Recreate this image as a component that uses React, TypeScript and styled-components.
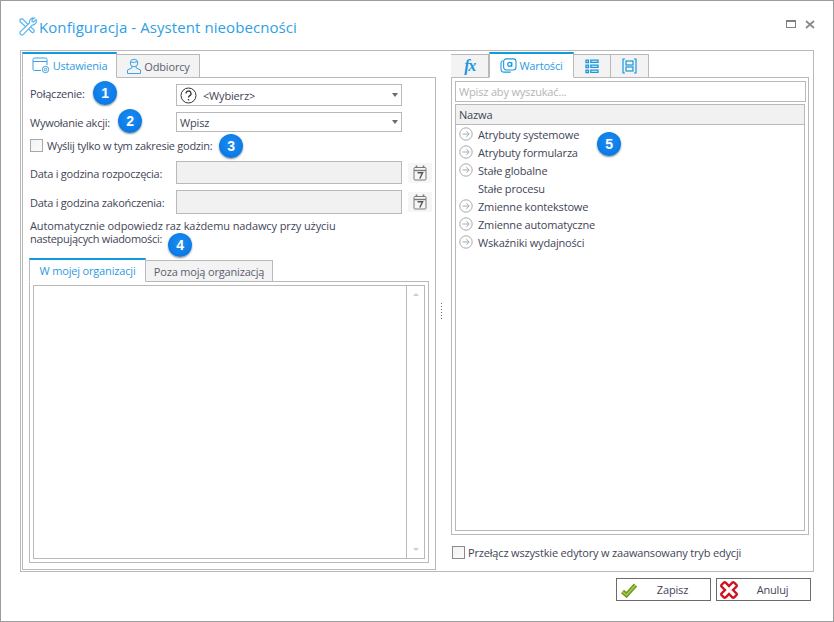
import styled, { createGlobalStyle } from "styled-components";

const Global = createGlobalStyle`
  html, body { margin: 0; padding: 0; background: #fff; }
  * { box-sizing: border-box; }
`;

const LINE = "#b9b9b9";
const BLUE = "#0f9be0";

const Dialog = styled.div`
  background: #fff;
  border: 1px solid #9c9c9c;
  color: #3f4656;
  display: flex;
  flex-direction: column;
  font-family: "Open Sans", sans-serif;
  font-size: 11px;
  height: 622px;
  letter-spacing: -0.17px;
  position: relative;
  width: 834px;
`;

const TitleBar = styled.div`
  align-items: center;
  display: flex;
  height: 49px;
  padding: 3px 18px 0 17px;
`;

const TitleText = styled.h1`
  color: #2f9fe3;
  flex: 1;
  font-size: 15px;
  font-weight: 400;
  letter-spacing: 0.08px;
  margin: 0 0 0 1px;
`;

const WindowButtons = styled.div`
  align-items: center;
  display: flex;
  gap: 9px;
  margin-bottom: 6px;
`;

const Main = styled.div`
  border: 1px solid ${LINE};
  display: grid;
  grid-template-columns: 414px 15px 358px;
  height: 522px;
  margin: 0 19px;
  padding: 1px 4px 1px 1px;
`;

const Pane = styled.div`
  display: flex;
  flex-direction: column;
  min-height: 0;
`;

const Tabs = styled.div<{ $height?: number }>`
  align-items: flex-end;
  display: flex;
  flex: none;
  height: ${(p) => p.$height ?? 26}px;
  margin-bottom: -1px;
  position: relative;
  z-index: 1;
`;

const Tab = styled.div<{ $active?: boolean; $width: number }>`
  align-items: center;
  background: ${(p) => (p.$active ? "#fff" : "#f3f3f3")};
  border: 1px solid ${LINE};
  border-bottom-color: ${(p) => (p.$active ? "#fff" : LINE)};
  border-left-width: ${(p) => (p.$active ? 1 : 0)}px;
  border-top: ${(p) => (p.$active ? `2px solid ${BLUE}` : `1px solid ${LINE}`)};
  color: ${(p) => (p.$active ? "#2d9ae0" : "#5a5f70")};
  display: flex;
  gap: 2px;
  height: ${(p) => (p.$active ? "100%" : "calc(100% - 2px)")};
  justify-content: center;
  width: ${(p) => p.$width}px;
`;

const TabPanel = styled.div`
  border: 1px solid ${LINE};
  display: flex;
  flex: 1;
  flex-direction: column;
  min-height: 0;
`;

const FormGrid = styled.div`
  align-items: center;
  display: grid;
  grid-template-columns: 140px 226px 24px;
  grid-template-rows: 22px 20px 17px 23px 24px;
  column-gap: 6px;
  margin-top: 6px;
  padding-left: 7px;
  row-gap: 6px;
`;

const Label = styled.label<{ $nudge?: number }>`
  letter-spacing: -0.25px;
  margin-top: ${(p) => p.$nudge ?? 0}px;
  white-space: nowrap;
`;

const Select = styled.div`
  align-items: center;
  border: 1px solid ${LINE};
  display: flex;
  gap: 6px;
  grid-column: 2;
  height: 100%;
  padding: 0 3px 0 3px;
`;

const SelectValue = styled.span`
  flex: 1;
`;

const Caret = styled.span`
  border-left: 3px solid transparent;
  border-right: 3px solid transparent;
  border-top: 4px solid #6b6b6b;
`;

const CheckRow = styled.div`
  align-items: center;
  display: flex;
  gap: 4px;
  grid-column: 1 / 4;
`;

const FormCheckRow = styled(CheckRow)`
  align-self: start;
  height: 13px;
  letter-spacing: -0.28px;
  margin-top: 1px;
`;

const Checkbox = styled.span<{ $dark?: boolean }>`
  background: linear-gradient(135deg, #f2f2f2, #fbfbfb);
  border: 1px solid ${(p) => (p.$dark ? "#8a8a8a" : "#a8a8a8")};
  display: block;
  flex: none;
  height: 13px;
  width: 13px;
`;

const DisabledInput = styled.div`
  background: #f1f1f1;
  border: 1px solid ${LINE};
  height: 100%;
`;

const CalendarButton = styled.div`
  align-items: center;
  background: #f6f6f6;
  display: flex;
  height: 20px;
  justify-content: center;
  width: 24px;
`;

const Note = styled.p`
  letter-spacing: -0.1px;
  line-height: 13px;
  margin: 5px 0 0;
  padding: 0 7px;
  width: 330px;
`;

const NoteTail = styled.span`
  letter-spacing: -0.32px;
`;

const InnerWrap = styled.div`
  display: flex;
  flex: 1;
  flex-direction: column;
  margin: 13px 6px 6px;
  min-height: 0;
`;

const InnerPanel = styled.div`
  border: 1px solid ${LINE};
  flex: 1;
  min-height: 0;
  padding: 3px;
`;

const Editor = styled.div`
  border: 1px solid ${LINE};
  display: flex;
  height: 100%;
  justify-content: flex-end;
`;

const ScrollBar = styled.div`
  align-items: center;
  border-left: 1px solid ${LINE};
  display: flex;
  flex-direction: column;
  justify-content: space-between;
  padding: 7px 0;
  width: 18px;
`;

const ScrollArrow = styled.span<{ $up?: boolean }>`
  border-left: 3px solid transparent;
  border-right: 3px solid transparent;
  ${(p) => (p.$up ? "border-bottom: 3px solid #cfcfcf;" : "border-top: 3px solid #cfcfcf;")}
`;

const Splitter = styled.div`
  align-items: center;
  display: flex;
  justify-content: center;
`;

const SplitterDots = styled.div`
  background: repeating-linear-gradient(#666 0 1px, transparent 1px 3px);
  height: 16px;
  margin-left: -5px;
  width: 1px;
`;

const RightPanel = styled(TabPanel)`
  flex: none;
  height: 458px;
  padding: 3px;
`;

const SearchBox = styled.div`
  align-items: center;
  border: 1px solid ${LINE};
  color: #b4b4b4;
  display: flex;
  flex: none;
  height: 21px;
  margin-bottom: 2px;
  padding-left: 3px;
  width: 351px;
`;

const TreeBox = styled.div`
  border: 1px solid ${LINE};
  flex: 1;
  min-height: 0;
  width: 350px;
`;

const TreeHeader = styled.div`
  align-items: center;
  background: #f1f1f1;
  border-bottom: 1px solid ${LINE};
  display: flex;
  height: 20px;
  padding-left: 3px;
`;

const TreeRow = styled.div`
  align-items: center;
  display: flex;
  gap: 5px;
  height: 18px;
  padding-left: 3px;
`;

const IconSlot = styled.span`
  display: block;
  flex: none;
  height: 14px;
  width: 14px;
`;

const ModeRow = styled(CheckRow)`
  flex: 1;
  gap: 3px;
  padding: 0 0 0 1px;
`;

const Footer = styled.div`
  display: flex;
  gap: 5px;
  justify-content: flex-end;
  margin-top: 6px;
  padding-right: 22px;
`;

const Button = styled.button`
  align-items: center;
  background: #fff;
  border: 1px solid #6b6b6b;
  color: #3f4656;
  display: flex;
  font: inherit;
  height: 23px;
  letter-spacing: inherit;
  padding: 0 0 0 3px;
  width: 95px;
`;

const ButtonLabel = styled.span`
  flex: 1;
  padding-right: 3px;
  text-align: center;
`;

const Badge = styled.span<{ $x: number; $y: number }>`
  align-items: center;
  background: radial-gradient(circle at 50% 40%, #1a8df5, #0671dc);
  border-radius: 50%;
  box-shadow: 0 1px 2px rgba(0, 0, 0, 0.45);
  color: #fff;
  display: flex;
  font-family: "Liberation Sans", sans-serif;
  font-size: 14px;
  font-weight: 700;
  height: 24px;
  justify-content: center;
  left: ${(p) => p.$x}px;
  position: absolute;
  top: ${(p) => p.$y}px;
  width: 24px;
`;

const FxMark = styled.span`
  color: #1997dd;
  font-family: "Liberation Serif", serif;
  font-size: 16px;
  font-style: italic;
  font-weight: 700;
  letter-spacing: -1.5px;
`;

const ToolsIcon = () => (
  <svg width="20" height="20" viewBox="0 0 20 20" fill="none" stroke="#5bb5ee" strokeWidth="1.2">
    <path d="M2.2 2.2 L4.6 1.8 L10.5 8 L8.2 10.2 L2 4.4 Z" />
    <path d="M9 10.5 L14 15.5 a1.8 1.8 0 0 0 2.2 -2.4 L11 8.2" />
    <path d="M18 2.6 L15.4 5 L14 4.4 L14 2.8 L16.4 1 A4 4 0 0 0 11.6 5.8 L2.2 14.8 A2.2 2.2 0 0 0 5 17.8 L14.2 8.2 A4 4 0 0 0 18 2.6 Z" fill="#fff" />
  </svg>
);

const MaximizeIcon = () => (
  <svg width="10" height="8" viewBox="0 0 10 8" fill="none" stroke="#808080">
    <rect x="0.5" y="0.5" width="9" height="7" />
    <path d="M0 1.5 H10" />
  </svg>
);

const CloseIcon = () => (
  <svg width="10" height="9" viewBox="0 0 10 9" fill="none" stroke="#8a8a8a" strokeWidth="1.8">
    <path d="M1 1 L9 8 M9 1 L1 8" />
  </svg>
);

const SettingsIcon = () => (
  <svg width="19" height="17" viewBox="0 0 19 17" fill="none" stroke="#3aa3e6" strokeWidth="1">
    <path d="M9 13.5 H2.5 a1.5 1.5 0 0 1 -1.5 -1.5 V2.5 A1.5 1.5 0 0 1 2.5 1 H13.5 A1.5 1.5 0 0 1 15 2.5 V8" />
    <path d="M1 4.5 H15" />
    <circle cx="13.5" cy="12.5" r="3.2" />
    <circle cx="13.5" cy="12.5" r="1.2" />
  </svg>
);

const PersonIcon = () => (
  <svg width="16" height="17" viewBox="0 0 16 17" fill="none" stroke="#3aa3e6" strokeWidth="1">
    <circle cx="8" cy="5" r="3.8" />
    <path d="M4.3 4 C7 5 10 4 11.5 3.6" />
    <path d="M5.8 8.4 V10 L1.5 12 V15.5 H14.5 V12 L10.2 10 V8.4" />
  </svg>
);

const HelpCircle = () => (
  <svg width="17" height="17" viewBox="0 0 17 17" fill="none" stroke="#333" strokeWidth="1">
    <circle cx="8.5" cy="8.5" r="7.5" />
    <path d="M6 6.5 A2.5 2.5 0 1 1 9.5 8.8 C8.7 9.2 8.5 9.6 8.5 10.6" strokeWidth="1.3" />
    <path d="M8.5 12 V13.4" strokeWidth="1.4" />
  </svg>
);

const CalendarIcon = () => (
  <svg width="14" height="16" viewBox="0 0 14 16" fill="none" stroke="#7a7a7a">
    <rect x="1" y="2.5" width="12" height="12.5" rx="1" />
    <path d="M1 5.5 H13" strokeWidth="1.4" />
    <path d="M3.5 0.5 V3 M10.5 0.5 V3" strokeWidth="1.6" />
    <path d="M4.5 7.7 H9.6 L6.8 13.5" stroke="#555" strokeWidth="1.4" />
  </svg>
);

const ValuesIcon = () => (
  <svg width="17" height="15" viewBox="0 0 19 17" fill="none" stroke="#1997dd" strokeWidth="1.2">
    <path d="M3 3 C1.6 3.4 1 4.2 1 5.5 V12.5 C1 14.5 2.5 16 4.5 16 H12" />
    <rect x="4" y="1" width="14" height="12.5" rx="3" fill="#fff" />
    <circle cx="10.8" cy="7.2" r="2.2" strokeWidth="1.4" />
    <path d="M13.2 4.8 V9.8" strokeWidth="1.4" />
  </svg>
);

const ListIcon = () => (
  <svg width="14" height="15" viewBox="0 0 14 15" fill="none" stroke="#1997dd" strokeWidth="1.3">
    <rect x="1" y="1.2" width="2.4" height="2.4" />
    <rect x="1" y="6.2" width="2.4" height="2.4" />
    <rect x="1" y="11.2" width="2.4" height="2.4" />
    <path d="M5.8 1.2 H13 V3.4 H5.8 Z M5.8 6.2 H13 V8.4 H5.8 Z M5.8 11.2 H13 V13.4 H5.8 Z" />
  </svg>
);

const FormIcon = () => (
  <svg width="15" height="16" viewBox="0 0 15 16" fill="none" stroke="#1997dd" strokeWidth="1.2">
    <path d="M3 1 H1 V15 H3 M12 1 H14 V15 H12" />
    <rect x="4" y="3" width="7" height="4" />
    <rect x="4" y="9" width="7" height="4" />
  </svg>
);

const ArrowCircle = () => (
  <svg width="14" height="14" viewBox="0 0 14 14" fill="none" stroke="#a9a9a9">
    <circle cx="7" cy="7" r="6.2" />
    <path d="M3.5 7 H10 M7.3 4.2 L10.2 7 L7.3 9.8" />
  </svg>
);

const CheckIcon = () => (
  <svg width="18" height="16" viewBox="0 0 18 16" fill="none">
    <path d="M2.5 9.5 L6.5 13 L15.5 3" stroke="#6c9a1f" strokeWidth="4.5" />
    <path d="M2.5 9.5 L6.5 13 L15.5 3" stroke="#a9cb4f" strokeWidth="1.6" />
  </svg>
);

const CrossIcon = () => (
  <svg width="18" height="18" viewBox="0 0 18 18">
    <path
      d="M1.5 4 L4 1.5 Q4.8 1 5.5 1.5 L9 5 L12.5 1.5 Q13.2 1 14 1.5 L16.5 4 Q17 4.8 16.5 5.5 L13 9 L16.5 12.5 Q17 13.2 16.5 14 L14 16.5 Q13.2 17 12.5 16.5 L9 13 L5.5 16.5 Q4.8 17 4 16.5 L1.5 14 Q1 13.2 1.5 12.5 L5 9 L1.5 5.5 Q1 4.8 1.5 4 Z"
      fill="#fff"
      stroke="#cf1220"
      strokeWidth="2.4"
    />
  </svg>
);

const treeItems = [
  { name: "Atrybuty systemowe", arrow: true },
  { name: "Atrybuty formularza", arrow: true },
  { name: "Stałe globalne", arrow: true },
  { name: "Stałe procesu", arrow: false },
  { name: "Zmienne kontekstowe", arrow: true },
  { name: "Zmienne automatyczne", arrow: true },
  { name: "Wskaźniki wydajności", arrow: true },
];

const badges = [
  { n: 1, x: 92, y: 80 },
  { n: 2, x: 117, y: 108 },
  { n: 3, x: 218, y: 133 },
  { n: 4, x: 167, y: 232 },
  { n: 5, x: 596, y: 131 },
];

export default function App() {
  return (
    <>
      <Global />
      <Dialog>
        <TitleBar>
          <ToolsIcon />
          <TitleText>Konfiguracja - Asystent nieobecności</TitleText>
          <WindowButtons>
            <MaximizeIcon />
            <CloseIcon />
          </WindowButtons>
        </TitleBar>
        <Main>
          <Pane>
            <Tabs>
              <Tab $active $width={95}><SettingsIcon />Ustawienia</Tab>
              <Tab $width={83}><PersonIcon />Odbiorcy</Tab>
            </Tabs>
            <TabPanel>
              <FormGrid>
                <Label $nudge={-3}>Połączenie:</Label>
                <Select><HelpCircle /><SelectValue>&lt;Wybierz&gt;</SelectValue><Caret /></Select>
                <span />
                <Label>Wywołanie akcji:</Label>
                <Select><SelectValue>Wpisz</SelectValue><Caret /></Select>
                <span />
                <FormCheckRow><Checkbox />Wyślij tylko w tym zakresie godzin:</FormCheckRow>
                <Label $nudge={1}>Data i godzina rozpoczęcia:</Label>
                <DisabledInput />
                <CalendarButton><CalendarIcon /></CalendarButton>
                <Label $nudge={1}>Data i godzina zakończenia:</Label>
                <DisabledInput />
                <CalendarButton><CalendarIcon /></CalendarButton>
              </FormGrid>
              <Note>Automatycznie odpowiedz raz każdemu nadawcy przy użyciu <NoteTail>nastepujących wiadomości:</NoteTail></Note>
              <InnerWrap>
                <Tabs $height={24}>
                  <Tab $active $width={117}>W mojej organizacji</Tab>
                  <Tab $width={127}>Poza moją organizacją</Tab>
                </Tabs>
                <InnerPanel>
                  <Editor>
                    <ScrollBar><ScrollArrow $up /><ScrollArrow /></ScrollBar>
                  </Editor>
                </InnerPanel>
              </InnerWrap>
            </TabPanel>
          </Pane>
          <Splitter><SplitterDots /></Splitter>
          <Pane>
            <Tabs>
              <Tab $width={38}><FxMark>fx</FxMark></Tab>
              <Tab $active $width={85}><ValuesIcon />Wartości</Tab>
              <Tab $width={37}><ListIcon /></Tab>
              <Tab $width={38}><FormIcon /></Tab>
            </Tabs>
            <RightPanel>
              <SearchBox>Wpisz aby wyszukać...</SearchBox>
              <TreeBox>
                <TreeHeader>Nazwa</TreeHeader>
                {treeItems.map((item) => (
                  <TreeRow key={item.name}>
                    <IconSlot>{item.arrow && <ArrowCircle />}</IconSlot>
                    {item.name}
                  </TreeRow>
                ))}
              </TreeBox>
            </RightPanel>
            <ModeRow><Checkbox $dark />Przełącz wszystkie edytory w zaawansowany tryb edycji</ModeRow>
          </Pane>
        </Main>
        <Footer>
          <Button><CheckIcon /><ButtonLabel>Zapisz</ButtonLabel></Button>
          <Button><CrossIcon /><ButtonLabel>Anuluj</ButtonLabel></Button>
        </Footer>
        {badges.map((b) => (
          <Badge key={b.n} $x={b.x} $y={b.y}>{b.n}</Badge>
        ))}
      </Dialog>
    </>
  );
}
